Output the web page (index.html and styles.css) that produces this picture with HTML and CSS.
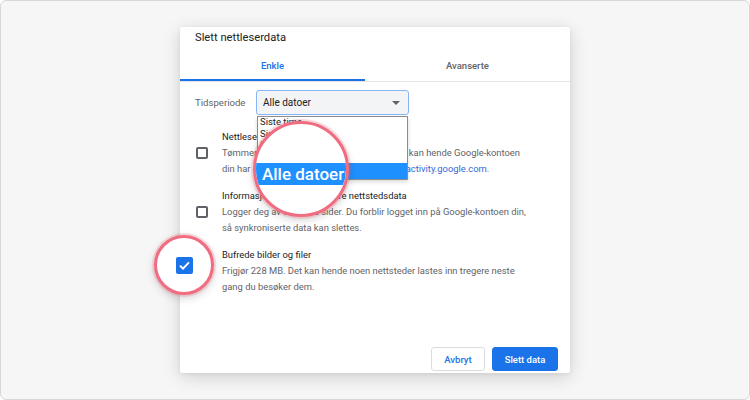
FILE: index.html
```html
<!DOCTYPE html>
<html lang="no">
<head>
<meta charset="utf-8">
<title>Slett nettleserdata</title>
<link rel="stylesheet" href="styles.css">
</head>
<body>
<div class="frame">
  <div class="dialog">
    <div class="title">Slett nettleserdata</div>
    <div class="tabs">
      <div class="tab active">Enkle</div>
      <div class="tab">Avanserte</div>
    </div>
    <div class="content">
      <div class="period">
        <span class="label">Tidsperiode</span>
        <div class="select">
          <span>Alle datoer</span>
          <svg class="arrow" width="8" height="4" viewBox="0 0 8 4"><path d="M0 0h8L4 4z" fill="#5f6368"/></svg>
          <ul class="dropdown">
            <li>Siste time</li>
            <li>Siste 24 timer</li>
            <li>Siste 7 dager</li>
            <li>Siste 4 uker</li>
            <li class="sel">Alle datoer</li>
          </ul>
          <div class="lens">
            <div class="lens-band">Alle datoer</div>
          </div>
        </div>
      </div>
      <div class="items">
        <div class="item">
          <span class="cb"></span>
          <div class="text">
            <div class="t">Nettleserlogg</div>
            <div class="d">Tømmer logg fra alle påloggede enheter. Det kan hende Google-kontoen<br>din har andre former for nettleserlogg på <span class="link">myactivity.google.com</span>.</div>
          </div>
        </div>
        <div class="item">
          <span class="cb"></span>
          <div class="text">
            <div class="t">Informasjonskapsler og andre nettstedsdata</div>
            <div class="d">Logger deg av de fleste sider. Du forblir logget inn på Google-kontoen din,<br>så synkroniserte data kan slettes.</div>
          </div>
        </div>
        <div class="item">
          <span class="cb"></span>
          <div class="text">
            <div class="t">Bufrede bilder og filer</div>
            <div class="d">Frigjør 228 MB. Det kan hende noen nettsteder lastes inn tregere neste<br>gang du besøker dem.</div>
          </div>
          <div class="lens-small">
            <span class="cb-checked">
              <svg width="11" height="9" viewBox="0 0 11 9"><path d="M1 4.6l3 3L10 1.4" fill="none" stroke="#fff" stroke-width="2"/></svg>
            </span>
          </div>
        </div>
      </div>
    </div>
    <div class="actions">
      <button class="btn">Avbryt</button>
      <button class="btn primary">Slett data</button>
    </div>
  </div>
</div>
</body>
</html>
```

FILE: styles.css
```css
* { box-sizing: border-box; }
html, body { margin: 0; padding: 0; }
body {
  font-family: Roboto, "Liberation Sans", Arial, sans-serif;
  width: 750px;
  height: 400px;
}
.frame {
  width: 750px;
  height: 400px;
  border: 1px solid #d8d8d8;
  border-radius: 6px;
  background: #f6f6f6;
  display: flex;
  align-items: center;
  justify-content: center;
}
.dialog {
  width: 390px;
  height: 346px;
  background: #fff;
  border-radius: 2px;
  box-shadow: 0 4px 18px rgba(0,0,0,0.16), 0 1px 4px rgba(0,0,0,0.06);
  display: flex;
  flex-direction: column;
}
.title {
  height: 28px;
  padding: 4px 15px 0;
  font-size: 11.2px;
  line-height: 14px;
  color: #202124;
}
.tabs {
  display: flex;
  height: 27px;
  border-bottom: 1px solid #e3e3e3;
}
.tab {
  flex: 1;
  text-align: center;
  font-size: 9.5px;
  font-weight: 500;
  line-height: 22px;
  color: #5f6368;
  position: relative;
}
.tab.active {
  flex: none;
  width: 185px;
  color: #1a73e8;
}
.tab.active::after {
  content: "";
  position: absolute;
  left: 0;
  right: 0;
  bottom: 0;
  height: 2px;
  background: #1a73e8;
}
.content {
  flex: 1;
  padding: 8px 15px 0;
}
.period {
  display: flex;
  align-items: center;
  height: 25px;
}
.label {
  width: 61px;
  font-size: 9.6px;
  color: #5f6368;
}
.select {
  position: relative;
  width: 153px;
  height: 25px;
  border: 1px solid #8ab4f8;
  border-radius: 3px;
  background: #f3f4f6;
  display: flex;
  align-items: center;
  justify-content: space-between;
  padding: 0 8px 0 6px;
  font-size: 10px;
  color: #202124;
}
.arrow { display: block; }
.dropdown {
  position: absolute;
  top: 25px;
  left: 0;
  width: 151px;
  margin: 0;
  padding: 0;
  list-style: none;
  background: #fff;
  border: 1px solid #8c8c8c;
  box-shadow: 0 2px 4px rgba(0,0,0,0.15);
  font-size: 9.5px;
  color: #202124;
  z-index: 1;
}
.dropdown li {
  height: 11.5px;
  line-height: 10px;
  padding-left: 2px;
}
.dropdown li.sel {
  height: 16px;
  line-height: 16px;
  background: #1e90ff;
  color: #fff;
}
.lens {
  position: absolute;
  left: -4px;
  top: 30px;
  width: 96px;
  height: 96px;
  border-radius: 50%;
  border: 3px solid #f06c80;
  background: #fff;
  overflow: hidden;
  box-shadow: 0 0 0 2px rgba(240,108,128,0.22), 0 3px 8px rgba(0,0,0,0.18);
  z-index: 2;
}
.lens-band {
  margin-top: 39px;
  height: 22px;
  background: #1e90ff;
  color: #fff;
  font-size: 17px;
  font-weight: 500;
  line-height: 22px;
  padding-left: 6px;
  white-space: nowrap;
}
.items {
  margin-top: 14px;
  display: flex;
  flex-direction: column;
  gap: 11px;
}
.item {
  position: relative;
  display: flex;
  align-items: center;
}
.cb {
  width: 12px;
  height: 12px;
  margin-left: 1px;
  margin-right: 14px;
  border: 2px solid #5f6368;
  border-radius: 2px;
  flex: none;
}
.text {
  font-size: 9.4px;
  line-height: 16px;
  white-space: nowrap;
}
.t { color: #202124; }
.d { color: #5f6368; }
.link { color: #3367d6; }
.lens-small {
  position: absolute;
  left: -41px;
  top: -12px;
  width: 60px;
  height: 60px;
  border-radius: 50%;
  border: 3px solid #f06c80;
  background: #fff;
  box-shadow: 0 0 0 2px rgba(240,108,128,0.22), 0 3px 8px rgba(0,0,0,0.18);
  display: flex;
  align-items: center;
  justify-content: center;
}
.cb-checked {
  width: 17px;
  height: 17px;
  border-radius: 2px;
  background: #1a73e8;
  display: flex;
  align-items: center;
  justify-content: center;
}
.cb-checked svg { display: block; }
.actions {
  display: flex;
  justify-content: flex-end;
  gap: 7px;
  padding: 0 12px 2px;
}
.btn {
  height: 24px;
  border-radius: 3px;
  border: 1px solid #dadce0;
  background: #fff;
  color: #1a73e8;
  font-family: Roboto, "Liberation Sans", Arial, sans-serif;
  font-size: 9.5px;
  font-weight: 500;
  padding: 0;
  width: 54px;
}
.btn.primary {
  width: 66px;
  background: #1a73e8;
  border-color: #1a73e8;
  color: #fff;
}
```
